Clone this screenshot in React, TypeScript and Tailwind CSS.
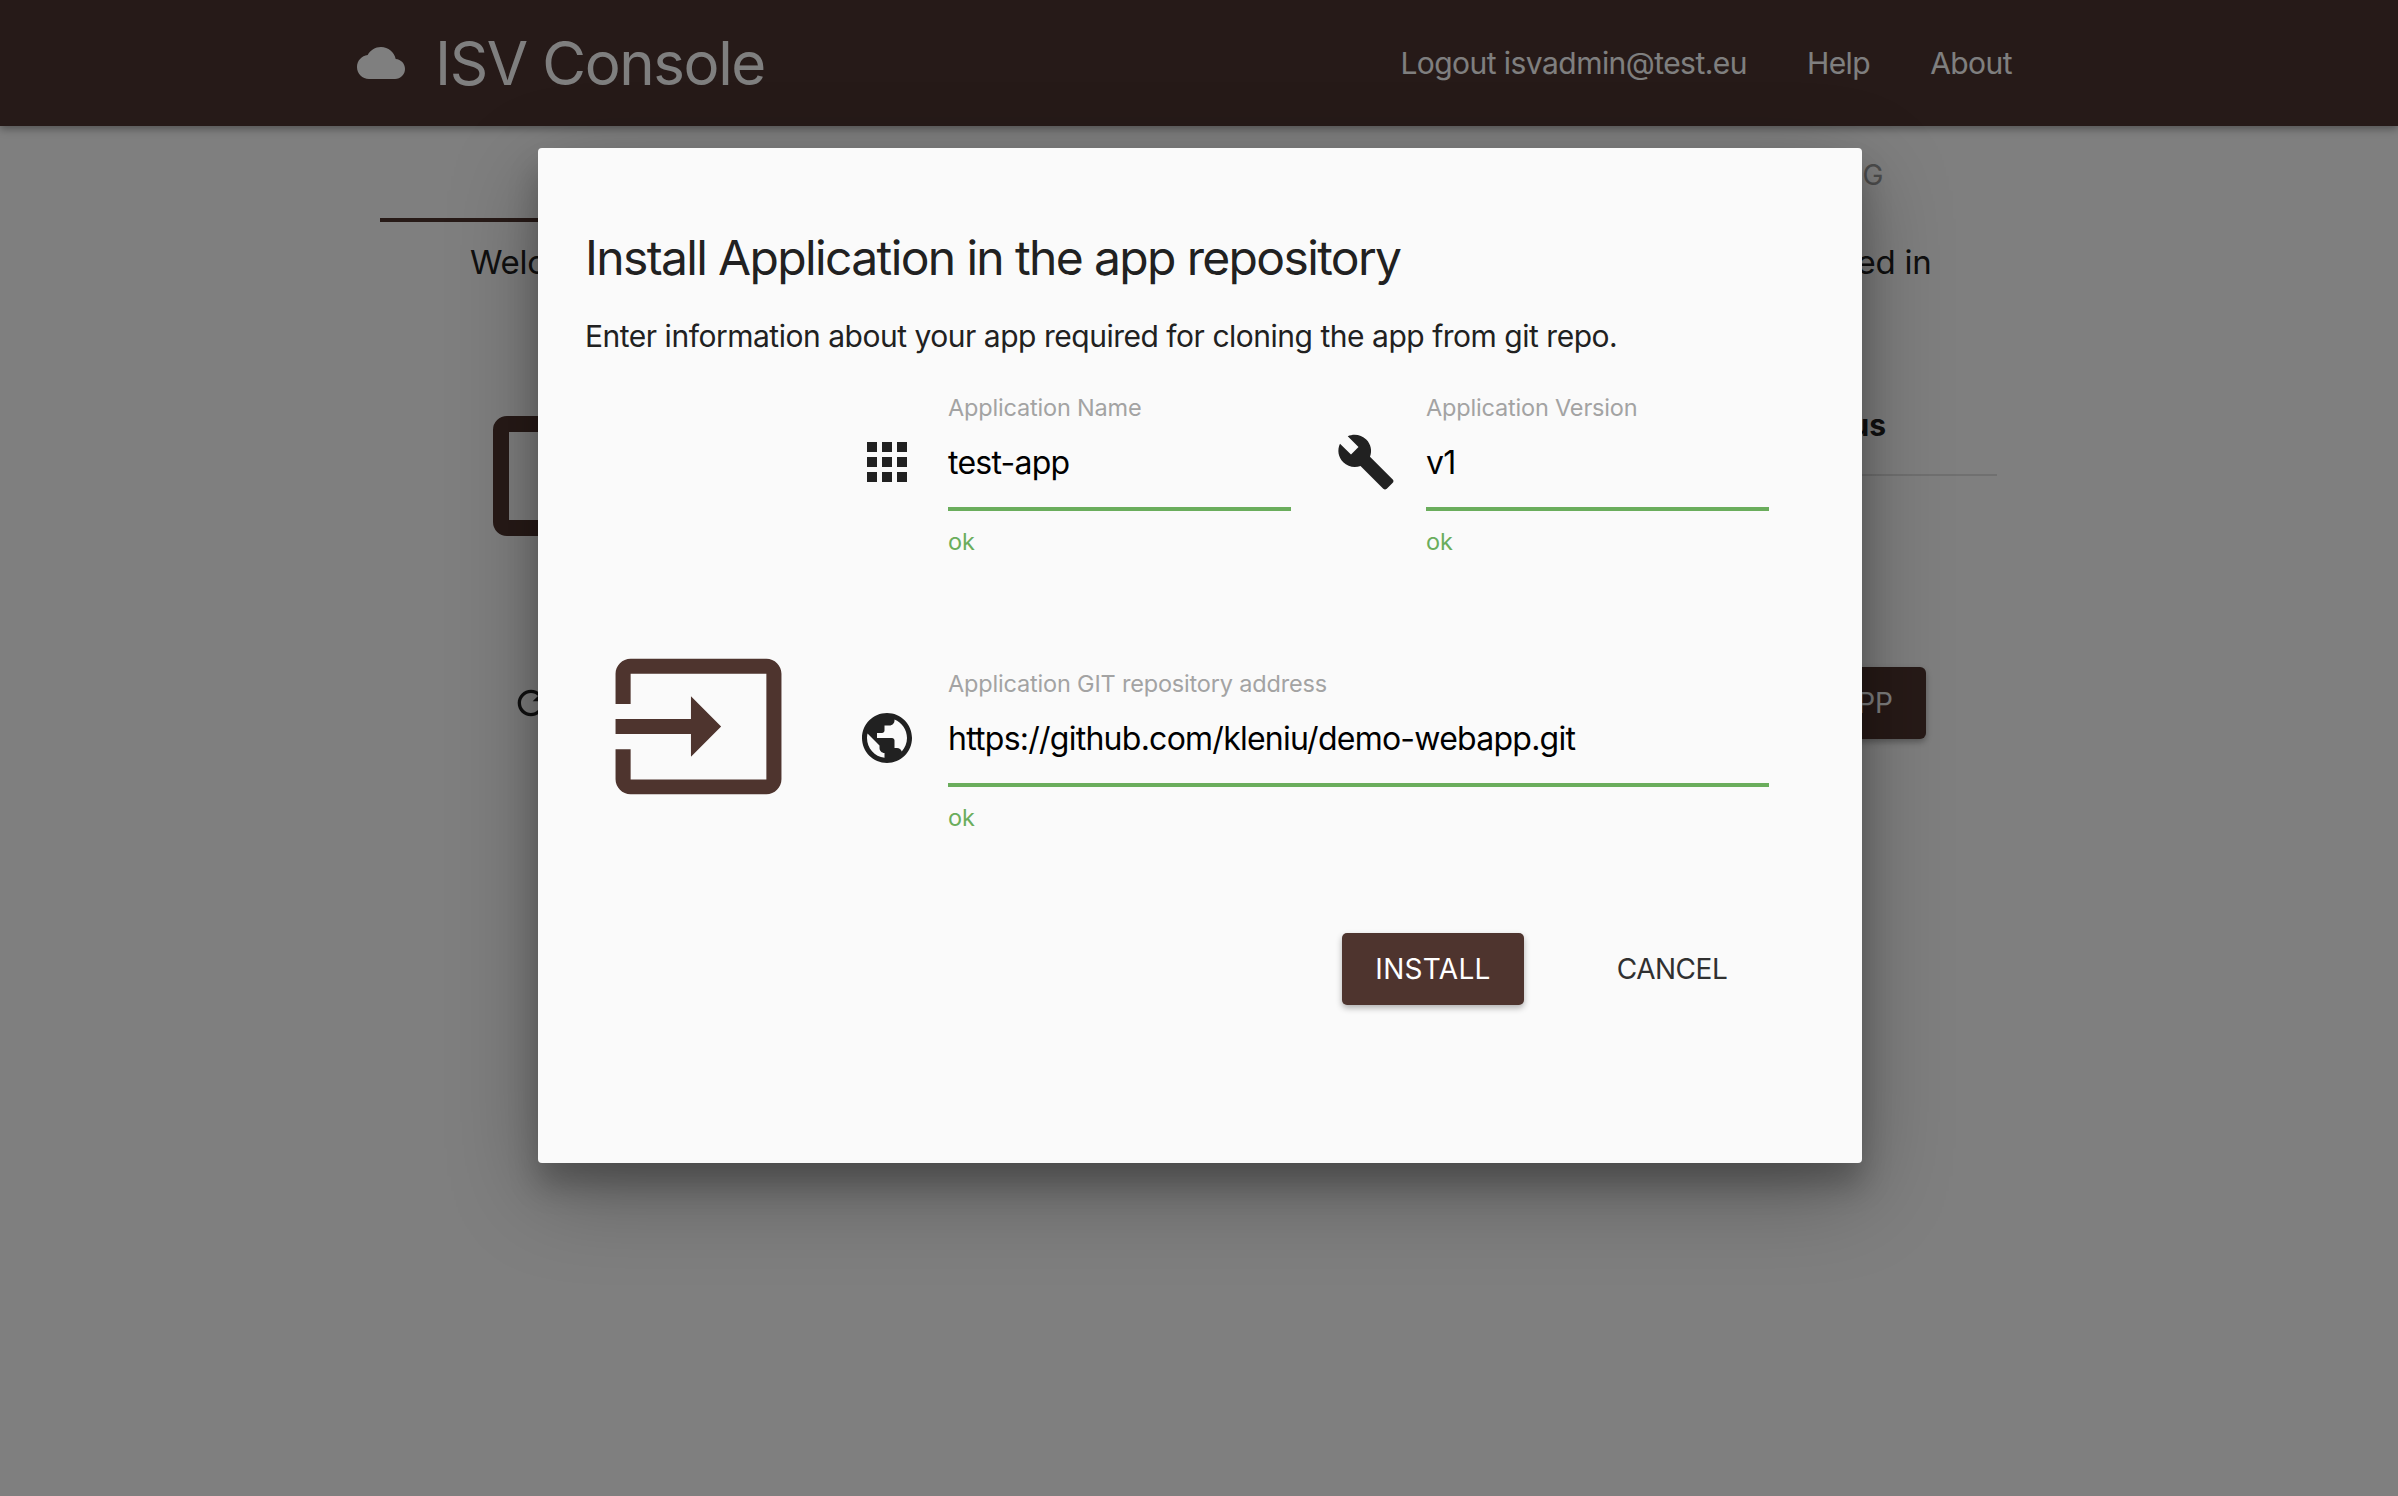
import React from 'react';

const Icon: React.FC<{ d: string; className: string }> = ({ d, className }) => (
  <svg viewBox="0 0 24 24" className={className} fill="currentColor">
    <path d={d} />
  </svg>
);

const paths = {
  cloud: 'M19.35 10.04C18.67 6.59 15.64 4 12 4 9.11 4 6.6 5.64 5.35 8.04 2.34 8.36 0 10.91 0 14c0 3.31 2.69 6 6 6h13c2.76 0 5-2.24 5-5 0-2.64-2.05-4.78-4.65-4.96z',
  apps: 'M4 8h4V4H4v4zm6 12h4v-4h-4v4zm-6 0h4v-4H4v4zm0-6h4v-4H4v4zm6 0h4v-4h-4v4zm6-10v4h4V4h-4zm-6 4h4V4h-4v4zm6 6h4v-4h-4v4zm0 6h4v-4h-4v4z',
  build: 'M22.7 19l-9.1-9.1c.9-2.3.4-5-1.5-6.9-2-2-5-2.4-7.4-1.3L9 6 6 9 1.6 4.7C.4 7.1.9 10.1 2.9 12.1c1.9 1.9 4.6 2.4 6.9 1.5l9.1 9.1c.4.4 1 .4 1.4 0l2.3-2.3c.5-.4.5-1.1.1-1.4z',
  input: 'M21 3.01H3c-1.1 0-2 .9-2 2V9h2V4.99h18v14.03H3V15H1v4.01c0 1.1.9 1.98 2 1.98h18c1.1 0 2-.88 2-1.98v-14c0-1.11-.9-2-2-2zM11 16l4-4-4-4v3H1v2h10v3z',
  globe: 'M12 2C6.48 2 2 6.48 2 12s4.48 10 10 10 10-4.48 10-10S17.52 2 12 2zm-1 17.93c-3.95-.49-7-3.85-7-7.93 0-.62.08-1.21.21-1.79L9 15v1c0 1.1.9 2 2 2v1.93zm6.9-2.54c-.26-.81-1-1.39-1.9-1.39h-1v-3c0-.55-.45-1-1-1H8v-2h2c.55 0 1-.45 1-1V7h2c1.1 0 2-.9 2-2v-.41c2.93 1.19 5 4.06 5 7.41 0 2.08-.8 3.97-2.1 5.39z',
  refresh: 'M17.65 6.35C16.2 4.9 14.21 4 12 4c-4.42 0-7.99 3.58-7.99 8s3.57 8 7.99 8c3.73 0 6.84-2.55 7.73-6h-2.08c-.82 2.33-3.04 4-5.65 4-3.31 0-6-2.69-6-6s2.69-6 6-6c1.66 0 3.14.69 4.22 1.78L13 11h7V4l-2.35 2.35z',
};

const Field: React.FC<{ label: string; value: string; className: string }> = ({ label, value, className }) => (
  <div className={className}>
    <div className="text-[23.5px] leading-[30px] tracking-[-0.18px] text-[#a3a3a3]">{label}</div>
    <div className="mt-[15px] text-[32px] leading-[50px] tracking-[-0.75px] text-black">{value}</div>
    <div className="mt-[19px] h-[4px] bg-[#6aad5c]" />
    <div className="mt-[16px] text-[23.5px] leading-[30px] text-[#6aad5c]">ok</div>
  </div>
);

export default function App() {
  return (
    <div className="relative h-[1496px] overflow-hidden bg-[#fefefe] font-['Inter',sans-serif]">
      {/* Page under the dialog */}
      <header className="flex h-[126px] items-center bg-[#4c3430] pl-[357px] pr-[386px] text-white shadow-[0_3px_8px_rgba(0,0,0,0.35)]">
        <Icon d={paths.cloud} className="h-[48px] w-[48px]" />
        <div className="ml-[30px] text-[60px] leading-none tracking-[-1.4px]">ISV Console</div>
        <nav className="ml-auto flex gap-[60px] text-[30px] tracking-[-0.55px]">
          <span>Logout isvadmin@test.eu</span>
          <span>Help</span>
          <span>About</span>
        </nav>
      </header>

      <main className="ml-[380px] flex w-[1617px] flex-col">
        <div className="grid h-[96px] grid-cols-3 text-center text-[28px] tracking-[-0.5px] text-[#9a9a9a]">
          <div className="border-b-[4px] border-[#4e342e]" />
          <div />
          <div className="pt-[28px]">APPLICATION CATALOG</div>
        </div>
        <p className="ml-[90px] mt-[20px] w-[1460px] whitespace-nowrap text-center text-[33px] leading-[40px] tracking-[-0.25px] text-[#212121]">
          Welcome to the ISV Console. Here you can see all the applications you have already installed in
        </p>
        <div className="mt-[134px] flex justify-between">
          <div className="ml-[113px] flex flex-col">
            <div className="h-[120px] w-[200px] rounded-[14px] border-[16px] border-[#4e342e]" />
            <Icon d={paths.refresh} className="ml-[18px] mt-[147px] h-[40px] w-[40px] text-[#212121]" />
          </div>
          <div className="flex w-[600px] flex-col">
            <div className="h-[60px] border-b-2 border-[#e0e0e0] pr-[111px] text-right text-[30px] font-bold leading-[18px] text-[#212121]">
              Status
            </div>
            <button className="mr-[71px] mt-[191px] h-[72px] self-end rounded-[6px] bg-[#4e342e] px-[33px] text-[28px] text-white shadow-[0_3px_6px_rgba(0,0,0,0.3)]">
              ADD APP
            </button>
          </div>
        </div>
      </main>

      {/* Modal */}
      <div className="absolute inset-0 flex items-start bg-black/50 pl-[538px] pt-[148px]">
        <div className="flex h-[1015px] w-[1324px] flex-col rounded-[4px] bg-[#fafafa] pl-[47px] pr-[93px] pt-[80px] shadow-[0_28px_90px_rgba(0,0,0,0.3),0_22px_30px_rgba(0,0,0,0.22)]">
          <h2 className="whitespace-nowrap text-[48px] leading-[60px] tracking-[-1.64px] text-[#212121]">
            Install Application in the app repository
          </h2>
          <p className="mt-[28px] whitespace-nowrap text-[30px] leading-[40px] tracking-[-0.48px] text-[#212121]">
            Enter information about your app required for cloning the app from git repo.
          </p>

          <div className="mt-[37px] flex items-start justify-end">
            <Icon d={paths.apps} className="mr-[31px] mt-[39px] h-[60px] w-[60px] text-[#212121]" />
            <Field label="Application Name" value="test-app" className="w-[343px]" />
            <Icon d={paths.build} className="ml-[45px] mr-[30px] mt-[39px] h-[60px] w-[60px] text-[#212121]" />
            <Field label="Application Version" value="v1" className="w-[343px]" />
          </div>

          <div className="mt-[112px] flex items-start">
            <Icon d={paths.input} className="-mt-[33px] ml-[23px] h-[181px] w-[181px] text-[#4e342e]" />
            <Icon d={paths.globe} className="ml-auto mr-[31px] mt-[39px] h-[60px] w-[60px] text-[#212121]" />
            <Field label="Application GIT repository address" value="https://github.com/kleniu/demo-webapp.git" className="w-[821px]" />
          </div>

          <div className="mt-[100px] flex items-center justify-end">
            <button className="h-[72px] w-[182px] rounded-[5px] bg-[#4e342e] text-[28px] tracking-[0.3px] text-white shadow-[0_3px_6px_rgba(0,0,0,0.3)]">
              INSTALL
            </button>
            <button className="ml-[69px] mr-[18px] h-[72px] w-[158px] text-[28px] tracking-[-0.5px] text-[#303030]">CANCEL</button>
          </div>
        </div>
      </div>
    </div>
  );
}
